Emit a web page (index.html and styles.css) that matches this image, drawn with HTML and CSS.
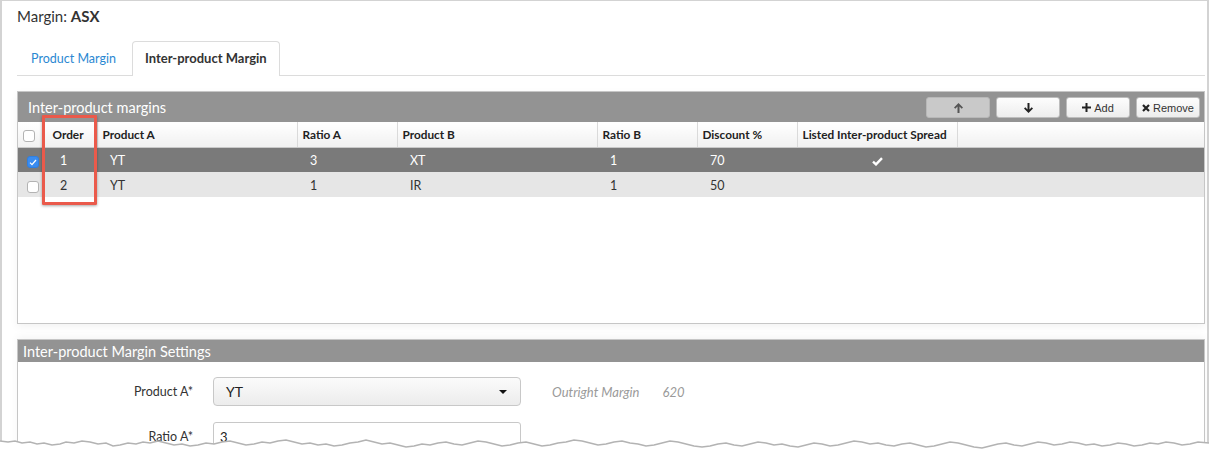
FILE: index.html
```html
<!DOCTYPE html>
<html lang="en">
<head>
<meta charset="utf-8">
<title>Margin: ASX</title>
<link rel="stylesheet" href="styles.css">
</head>
<body>
<div class="frame">
  <h1 class="page-title">Margin: <b>ASX</b></h1>

  <ul class="tabs">
    <li class="tab">Product Margin</li>
    <li class="tab active">Inter-product Margin</li>
  </ul>

  <section class="panel grid-panel">
    <div class="panel-head">
      <span class="panel-title">Inter-product margins</span>
      <div class="toolbar">
        <button class="btn disabled" type="button" aria-label="Move up">
          <svg width="9" height="10" viewBox="0 0 9 10"><path d="M4.5 0 9 4.4 7.7 5.7 5.5 3.6V10h-2V3.6L1.3 5.7 0 4.4Z"/></svg>
        </button>
        <button class="btn" type="button" aria-label="Move down">
          <svg width="9" height="10" viewBox="0 0 9 10"><path d="M4.5 10 9 5.6 7.7 4.3 5.5 6.4V0h-2v6.4L1.3 4.3 0 5.6Z"/></svg>
        </button>
        <button class="btn" type="button">
          <svg width="9" height="9" viewBox="0 0 9 9"><path d="M3.5 0h2v3.5H9v2H5.5V9h-2V5.5H0v-2h3.5Z"/></svg>
          Add
        </button>
        <button class="btn" type="button">
          <svg width="8" height="8" viewBox="0 0 8 8"><path d="M1 1 7 7M7 1 1 7" stroke="#222" stroke-width="2.2" fill="none"/></svg>
          Remove
        </button>
      </div>
    </div>

    <table class="grid">
      <colgroup>
        <col class="c-check"><col class="c-order"><col class="c-wide"><col class="c-mid"><col class="c-wide"><col class="c-mid"><col class="c-mid"><col class="c-listed"><col>
      </colgroup>
      <thead>
        <tr>
          <th class="check-cell"><span class="box"></span></th>
          <th>Order</th>
          <th>Product A</th>
          <th>Ratio A</th>
          <th>Product B</th>
          <th>Ratio B</th>
          <th>Discount %</th>
          <th>Listed Inter-product Spread</th>
          <th class="filler"></th>
        </tr>
      </thead>
      <tbody>
        <tr class="selected">
          <td class="check-cell"><span class="box checked"><svg width="8" height="7" viewBox="0 0 8 7"><path d="M1 3.6 3 5.6 7 1" stroke="#fff" stroke-width="1.3" fill="none"/></svg></span></td>
          <td class="order">1</td>
          <td>YT</td>
          <td>3</td>
          <td>XT</td>
          <td>1</td>
          <td>70</td>
          <td class="center"><svg width="11" height="9" viewBox="0 0 11 9"><path d="M1 4.6 4 7.4 10 1.2" stroke="#fff" stroke-width="2.4" fill="none"/></svg></td>
          <td></td>
        </tr>
        <tr>
          <td class="check-cell"><span class="box"></span></td>
          <td class="order">2</td>
          <td>YT</td>
          <td>1</td>
          <td>IR</td>
          <td>1</td>
          <td>50</td>
          <td></td>
          <td></td>
        </tr>
      </tbody>
    </table>
  </section>

  <section class="panel settings-panel">
    <div class="panel-head settings-head">Inter-product Margin Settings</div>
    <div class="form">
      <div class="form-row">
        <label class="form-label">Product A*</label>
        <div class="select"><span>YT</span><i class="caret"></i></div>
        <span class="hint">Outright Margin</span>
        <span class="hint">620</span>
      </div>
      <div class="form-row">
        <label class="form-label">Ratio A*</label>
        <div class="input">3</div>
      </div>
    </div>
  </section>

  <div class="callout"></div>

  <svg class="tear" width="1209" height="22" viewBox="0 0 1209 22">
    <path fill="#fff" d="M0 11L8 12 15 11 22 13 30 12 37 14 44 13 52 15 60 14 66 12 74 13 82 11 90 12 98 14 106 13 113 16 120 15 128 13 136 14 143 12 150 13 158 11 166 13 174 15 182 14 190 16 198 15 206 13 214 14 222 12 230 11 238 13 246 15 254 14 262 12 270 13 278 11 286 10 294 12 302 14 310 13 318 15 326 14 334 16 342 15 350 13 358 12 366 10 374 12 382 14 390 13 398 15 406 17 414 16 422 14 430 15 438 13 446 12 454 14 462 15 470 13 478 11 486 12 494 14 502 16 510 15 518 13 526 12 534 14 542 16 550 15 558 13 566 12 574 10 582 11 590 13 598 15 606 14 614 12 622 11 630 13 638 14 646 16 654 15 662 13 670 11 678 12 686 14 694 16 702 17 710 16 718 14 726 13 734 15 742 16 750 14 758 12 766 13 774 15 782 14 790 16 798 17 806 15 814 13 822 14 830 16 838 15 846 13 854 11 862 12 870 14 878 13 886 15 894 16 902 14 910 13 918 15 926 17 934 16 942 14 950 12 958 13 966 15 974 17 982 18 990 16 998 14 1006 13 1014 15 1022 16 1030 14 1038 12 1046 13 1054 15 1062 14 1070 12 1078 13 1086 15 1094 14 1102 16 1110 15 1118 13 1126 14 1134 16 1142 15 1150 13 1158 14 1166 12 1174 13 1182 15 1190 14 1198 12 1209 13V22H0Z"/>
    <polyline fill="none" stroke="#b3b3b3" stroke-width="1.4" points="0,11 8,12 15,11 22,13 30,12 37,14 44,13 52,15 60,14 66,12 74,13 82,11 90,12 98,14 106,13 113,16 120,15 128,13 136,14 143,12 150,13 158,11 166,13 174,15 182,14 190,16 198,15 206,13 214,14 222,12 230,11 238,13 246,15 254,14 262,12 270,13 278,11 286,10 294,12 302,14 310,13 318,15 326,14 334,16 342,15 350,13 358,12 366,10 374,12 382,14 390,13 398,15 406,17 414,16 422,14 430,15 438,13 446,12 454,14 462,15 470,13 478,11 486,12 494,14 502,16 510,15 518,13 526,12 534,14 542,16 550,15 558,13 566,12 574,10 582,11 590,13 598,15 606,14 614,12 622,11 630,13 638,14 646,16 654,15 662,13 670,11 678,12 686,14 694,16 702,17 710,16 718,14 726,13 734,15 742,16 750,14 758,12 766,13 774,15 782,14 790,16 798,17 806,15 814,13 822,14 830,16 838,15 846,13 854,11 862,12 870,14 878,13 886,15 894,16 902,14 910,13 918,15 926,17 934,16 942,14 950,12 958,13 966,15 974,17 982,18 990,16 998,14 1006,13 1014,15 1022,16 1030,14 1038,12 1046,13 1054,15 1062,14 1070,12 1078,13 1086,15 1094,14 1102,16 1110,15 1118,13 1126,14 1134,16 1142,15 1150,13 1158,14 1166,12 1174,13 1182,15 1190,14 1198,12 1209,13"/>
  </svg>
</div>
</body>
</html>
```

FILE: styles.css
```css
* { box-sizing: border-box; }

html, body {
  margin: 0;
  height: 451px;
  overflow: hidden;
  background: #fff;
}

body {
  font-family: Lato, "Noto Sans", sans-serif;
  color: #333;
}

/* window frame */
.frame {
  position: relative;
  height: 451px;
  border-left: 2px solid #d3d3d3;
  border-right: 2px solid #d3d3d3;
  border-top: 1px solid #d3d3d3;
  padding: 0 2px 0 15px;
}

.page-title {
  margin: 5px 0 0;
  font-size: 15px;
  font-weight: 400;
  line-height: 20px;
  color: #333;
}

/* tabs */
.tabs {
  display: flex;
  gap: 2px;
  margin: 15px 0 0;
  padding: 0;
  list-style: none;
  height: 35px;
  border-bottom: 1px solid #dcdcdc;
}

.tab {
  height: 34px;
  padding: 0 13px;
  line-height: 33px;
  font-size: 12.5px;
  color: #2b88d2;
  border: 1px solid transparent;
  border-bottom: none;
  border-radius: 4px 4px 0 0;
}

.tab.active {
  height: 35px;
  padding: 0 12px;
  font-size: 13px;
  color: #333;
  font-weight: 700;
  border-color: #dcdcdc;
  background: #fff;
}

/* panels */
.panel {
  border: 1px solid #c6c6c6;
  background: #fff;
}

.grid-panel {
  margin-top: 15px;
  height: 233px;
  overflow: hidden;
  box-shadow: 0 3px 8px rgba(0, 0, 0, 0.05);
}

.panel-head {
  display: flex;
  align-items: center;
  height: 30px;
  padding: 0 4px 0 10px;
  background: #939393;
  color: #fff;
  font-size: 14.5px;
}

.toolbar {
  display: flex;
  gap: 6px;
  margin-left: auto;
  margin-top: 1px;
}

.btn {
  display: flex;
  align-items: center;
  justify-content: center;
  gap: 3px;
  width: 64px;
  height: 21px;
  padding: 0;
  border: 1px solid #bdbdbd;
  border-radius: 3px;
  background: linear-gradient(#fdfdfd, #ededed);
  font-family: "Liberation Sans", Arial, sans-serif;
  font-size: 11px;
  color: #333;
}

.btn svg { fill: #222; }

.btn.disabled {
  background: #c9c9c9;
  border-color: #b8b8b8;
}

.btn.disabled svg { fill: #555; }

/* grid */
.grid {
  width: 100%;
  border-collapse: collapse;
  table-layout: fixed;
  font-size: 12.5px;
}

.c-check { width: 26px; }
.c-order { width: 53px; }
.c-wide { width: 200px; }
.c-mid { width: 100px; }
.c-listed { width: 160px; }

.grid th {
  height: 25px;
  padding: 1px 5px 0;
  text-align: left;
  font-size: 11.8px;
  font-weight: 700;
  color: #222;
  white-space: nowrap;
  background: linear-gradient(#ffffff, #f1f1f1);
  border-right: 1px solid #dadada;
  border-bottom: 1px solid #c9c9c9;
}

.grid th:nth-child(2) { padding-left: 8px; }

.grid th.filler { border-right: none; }

.grid td {
  height: 25px;
  padding: 2px 13px 0;
  color: #333;
  background: #e6e6e6;
}

.grid td.order { padding-left: 16px; }

.grid tr.selected td {
  background: #7a7a7a;
  color: #fff;
}

.grid td.center { text-align: center; padding: 0; }
.grid td.center svg { vertical-align: middle; }

.grid .check-cell { padding: 0 0 0 5px; }
.grid td.check-cell { padding: 2px 0 0 9px; }

.box {
  display: inline-flex;
  align-items: center;
  justify-content: center;
  width: 12px;
  height: 12px;
  vertical-align: middle;
  background: #fff;
  border: 1px solid #b3b3b3;
  border-radius: 3px;
}

.box.checked {
  background: #3a8cf0;
  border-color: #2f7fe0;
}

/* settings */
.settings-panel {
  margin-top: 15px;
  height: 200px;
  box-shadow: 0 -3px 8px rgba(0, 0, 0, 0.04);
}

.settings-head {
  height: 22px;
  padding-left: 5px;
}

.form {
  display: flex;
  flex-direction: column;
  gap: 16px;
  padding-top: 15px;
}

.form-row {
  display: flex;
  align-items: center;
  height: 29px;
}

.form-label {
  width: 175px;
  margin-right: 20px;
  text-align: right;
  font-size: 12.5px;
  color: #333;
}

.select {
  display: flex;
  align-items: center;
  width: 308px;
  height: 29px;
  padding: 0 13px 0 12px;
  border: 1px solid #c8c8c8;
  border-radius: 4px;
  background: linear-gradient(#fbfbfb, #ececec);
  font-size: 14px;
  color: #222;
}

.caret {
  margin-left: auto;
  width: 0;
  height: 0;
  border-left: 4px solid transparent;
  border-right: 4px solid transparent;
  border-top: 4px solid #111;
}

.hint {
  margin-left: 31px;
  font-size: 13px;
  font-style: italic;
  color: #9a9a9a;
}

.hint + .hint { margin-left: 23px; }

.input {
  display: flex;
  align-items: center;
  width: 308px;
  height: 29px;
  padding: 0 6px;
  border: 1px solid #c8c8c8;
  border-radius: 3px;
  background: #fff;
  font-size: 13px;
  color: #222;
}

/* annotation box around the Order column */
.callout {
  position: absolute;
  left: 40px;
  top: 114px;
  width: 55px;
  height: 90px;
  border: 3px solid #ea5a4b;
  border-radius: 1px;
  box-shadow: 0 1px 3px rgba(0, 0, 0, 0.35);
}

/* torn bottom edge */
.tear {
  position: absolute;
  left: -2px;
  top: 429px;
  display: block;
}
```
